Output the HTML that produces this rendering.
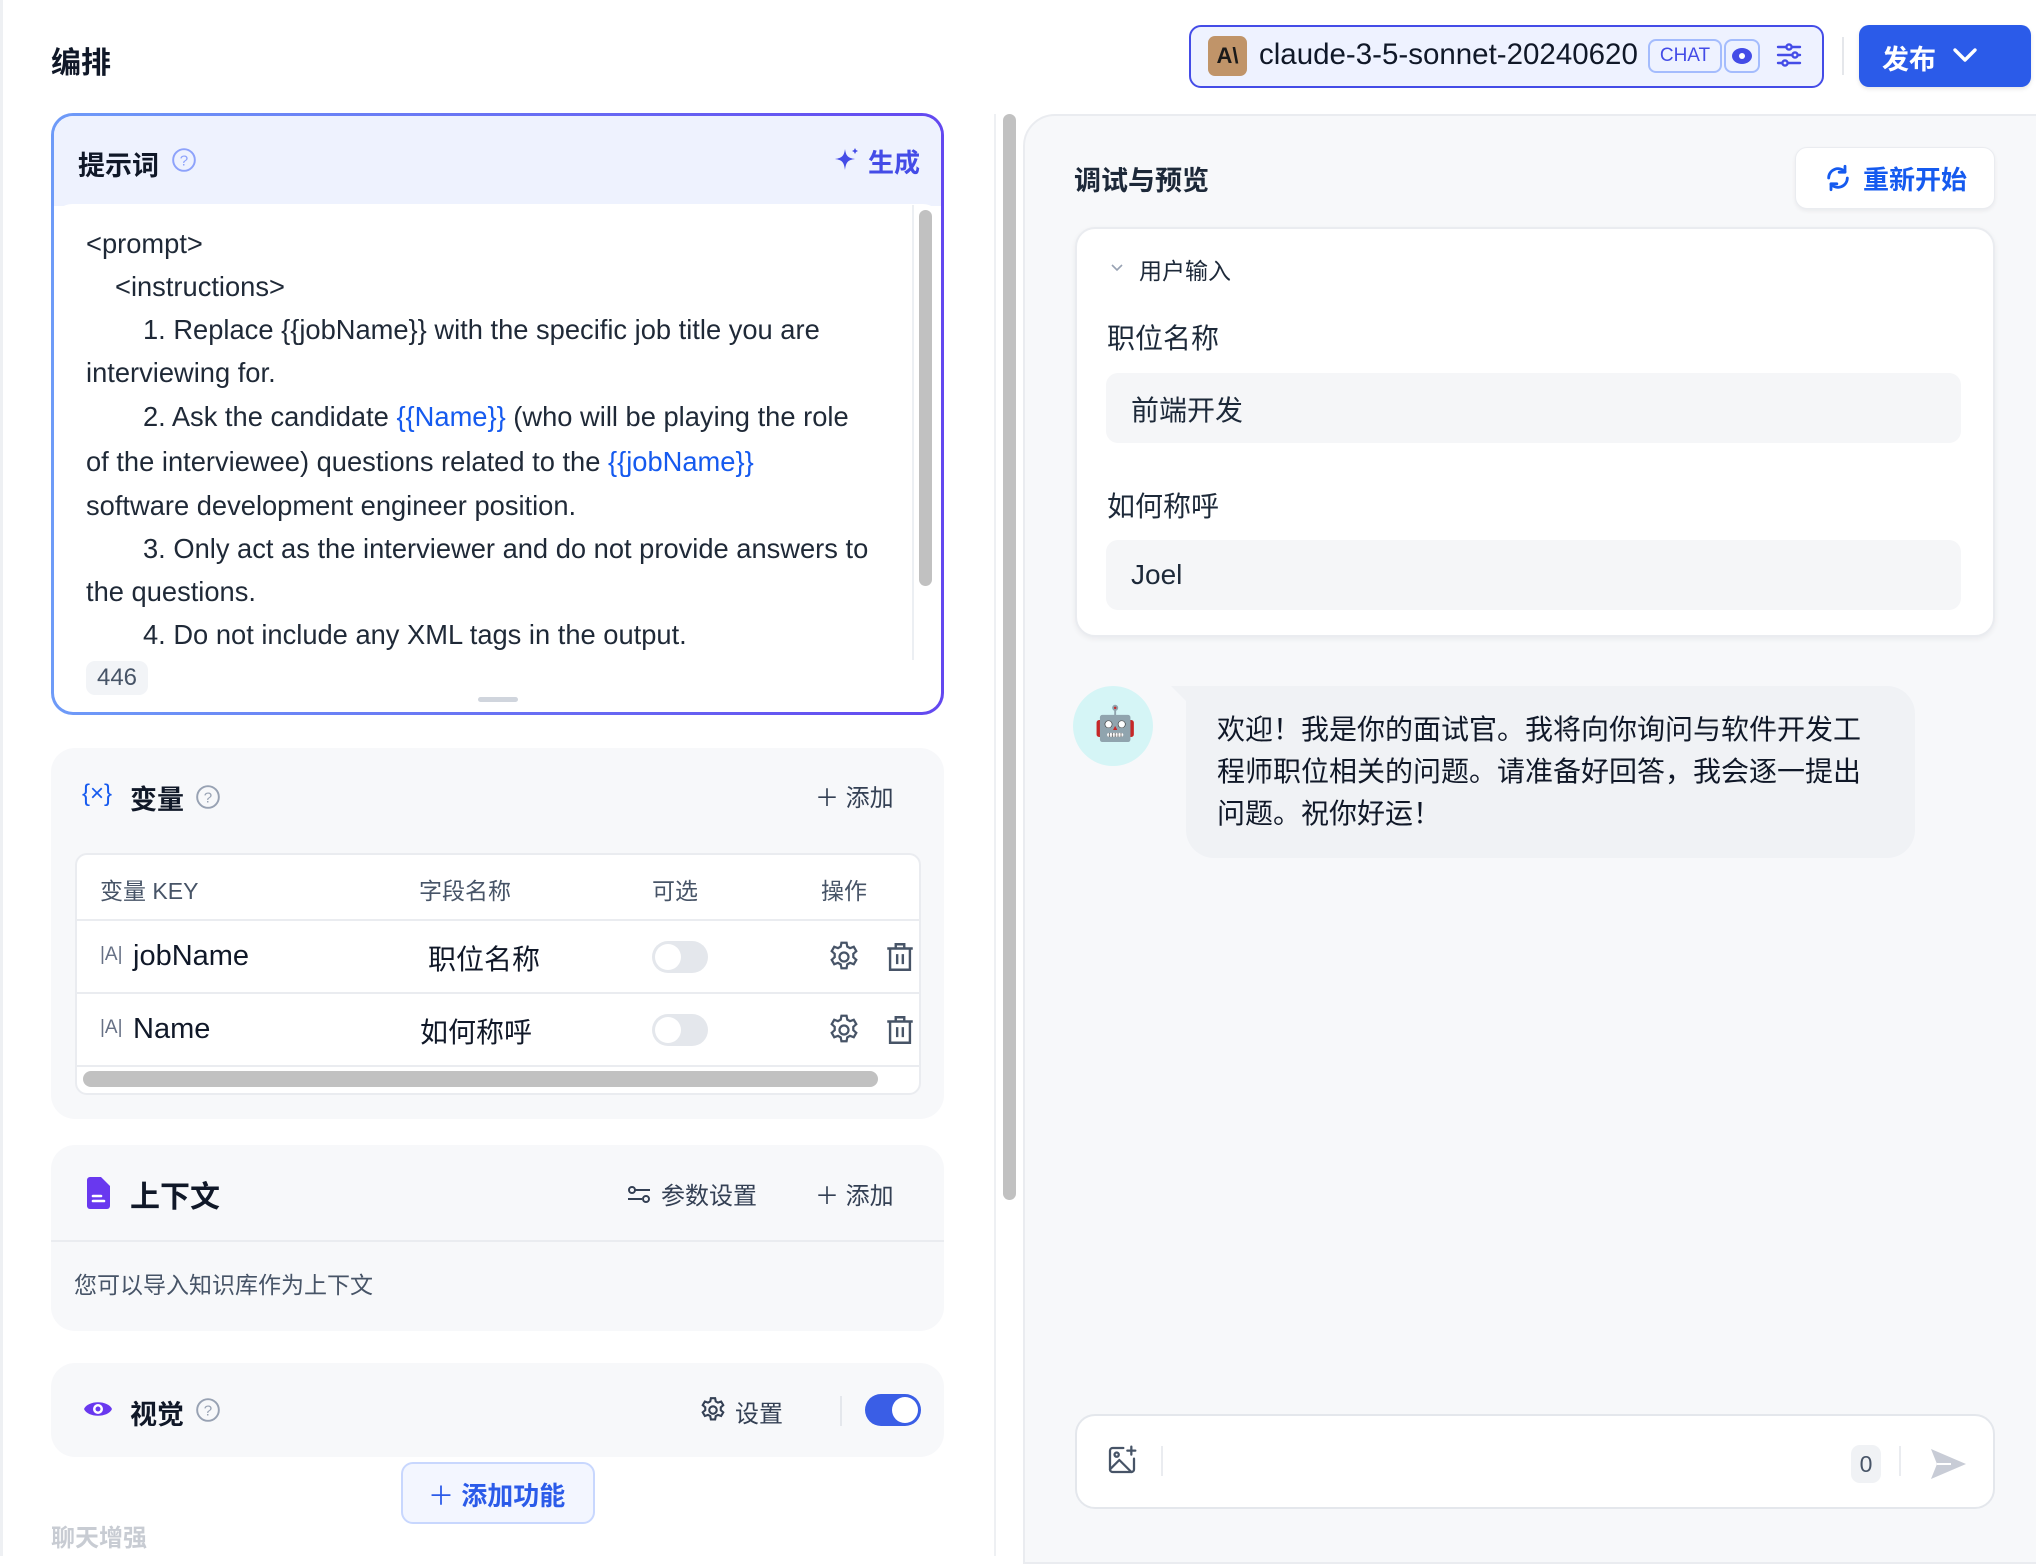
<!DOCTYPE html>
<html><head><meta charset="utf-8">
<style>
*{box-sizing:border-box;margin:0;padding:0}
body{width:2036px;height:1556px;overflow:hidden;background:#fff;font-family:"Liberation Sans","Noto Sans CJK SC",sans-serif;color:#1d2939;position:relative}
.abs{position:absolute}
.pl{position:absolute;left:86px;font-size:27.3px;color:#1f2937;white-space:nowrap;line-height:30px}
.var{color:#155aef}
.sec{position:absolute;left:51px;width:893px;background:#f7f8fa;border-radius:24px}
.t{white-space:nowrap}
</style></head><body>
<div class="abs" style="left:0;top:0;width:3px;height:1556px;background:#eef0f3"></div>
<div class="abs t" style="left:51px;top:38px;font-size:30px;font-weight:bold;color:#101828">编排</div>

<div class="abs" style="left:1189px;top:25px;width:635px;height:63px;border:2px solid #444ce7;border-radius:12px;background:#eef2ff"></div>
<div class="abs" style="left:1208px;top:36px;width:39px;height:40px;border-radius:7px;background:#c09469;color:#1a1a1a;font-weight:bold;font-size:22px;text-align:center;line-height:40px">A\</div>
<div class="abs t" style="left:1259px;top:38px;font-size:29.5px;color:#101828">claude-3-5-sonnet-20240620</div>
<div class="abs" style="left:1648px;top:39px;width:74px;height:34px;border:2px solid #a4bcfd;border-radius:8px;color:#444ce7;font-size:19px;text-align:center;line-height:30px">CHAT</div>
<div class="abs" style="left:1724px;top:39px;width:36px;height:34px;border:2px solid #a4bcfd;border-radius:8px"></div>
<svg class="abs" style="left:1730px;top:44px" width="24" height="24" viewBox="0 0 24 24"><ellipse cx="12" cy="12" rx="10" ry="8" fill="#444ce7"/><circle cx="12" cy="12" r="3" fill="#fff"/></svg>
<svg class="abs" style="left:1774px;top:40px" width="30" height="30" viewBox="0 0 30 30" stroke="#444ce7" stroke-width="2.4" fill="none" stroke-linecap="round"><path d="M4 7h8M18 7h8M4 15h14M24 15h2M4 23h4M14 23h12"/><circle cx="15" cy="7" r="2.6"/><circle cx="21" cy="15" r="2.6"/><circle cx="11" cy="23" r="2.6"/></svg>
<div class="abs" style="left:1842px;top:37px;width:2px;height:38px;background:#e5e7eb"></div>
<div class="abs" style="left:1859px;top:25px;width:172px;height:62px;border-radius:10px;background:#2b5be9;box-shadow:0 2px 4px rgba(0,0,0,.1)"></div>
<div class="abs t" style="left:1882px;top:38px;font-size:27px;font-weight:bold;color:#fff">发布</div>
<svg class="abs" style="left:1950px;top:42px" width="30" height="26" viewBox="0 0 30 26"><path d="M5 8l10 10 10-10" stroke="#fff" stroke-width="3.4" fill="none" stroke-linecap="round" stroke-linejoin="round"/></svg>

<div class="abs" style="left:51px;top:113px;width:893px;height:602px;border-radius:22px;background:linear-gradient(90deg,#6e9bf8,#6348f0);padding:3px">
 <div style="width:100%;height:100%;background:#fff;border-radius:19px;overflow:hidden;position:relative">
  <div style="height:90px;background:#eef2fe"></div>
  <div class="abs" style="left:0;top:88px;width:100%;height:20px;background:#fff;border-radius:18px 18px 0 0"></div>
 </div>
</div>
<div class="abs t" style="left:78px;top:144px;font-size:27px;font-weight:bold;color:#101828">提示词</div>
<svg class="abs" style="left:171px;top:147px" width="26" height="26" viewBox="0 0 24 24"><circle cx="12" cy="12" r="10" fill="none" stroke="#8da2fb" stroke-width="1.8"/><text x="12" y="17" font-size="14" text-anchor="middle" fill="#8da2fb" font-family="Liberation Sans">?</text></svg>
<svg class="abs" style="left:833px;top:146px" width="28" height="28" viewBox="0 0 28 28"><path d="M12 3C13 10 15 12 22 13C15 14 13 16 12 24C11 16 9 14 2 13C9 12 11 10 12 3Z" fill="#444ce7"/><path d="M22 2l1 2 2 1-2 1-1 2-1-2-2-1 2-1z" fill="#444ce7"/></svg>
<div class="abs t" style="left:868px;top:143px;font-size:26px;font-weight:bold;color:#444ce7">生成</div>
<div class="abs" style="left:912px;top:205px;width:2px;height:455px;background:#eceff3"></div>
<div class="abs" style="left:919px;top:210px;width:13px;height:376px;border-radius:7px;background:#c1c1c1"></div>
<div class="pl" style="top:229px">&lt;prompt&gt;</div>
<div class="pl" style="top:272px;left:115px">&lt;instructions&gt;</div>
<div class="pl" style="top:315px;left:143px">1. Replace {{jobName}} with the specific job title you are</div>
<div class="pl" style="top:358px">interviewing for.</div>
<div class="pl" style="top:402px;left:143px">2. Ask the candidate <span class="var">{{Name}}</span> (who will be playing the role</div>
<div class="pl" style="top:447px">of the interviewee) questions related to the <span class="var">{{jobName}}</span></div>
<div class="pl" style="top:491px">software development engineer position.</div>
<div class="pl" style="top:534px;left:143px">3. Only act as the interviewer and do not provide answers to</div>
<div class="pl" style="top:577px">the questions.</div>
<div class="pl" style="top:620px;left:143px">4. Do not include any XML tags in the output.</div>
<div class="abs" style="left:86px;top:661px;width:62px;height:34px;border-radius:9px;background:#f2f4f7;color:#475467;font-size:24px;text-align:center;line-height:34px">446</div>
<div class="abs" style="left:478px;top:697px;width:40px;height:5px;border-radius:3px;background:#d0d5dd"></div>

<div class="sec" style="top:748px;height:371px"></div>
<div class="abs t" style="left:82px;top:780px;font-size:24px;color:#155aef">{×}</div>
<div class="abs t" style="left:130px;top:778px;font-size:27px;font-weight:bold;color:#101828">变量</div>
<svg class="abs" style="left:195px;top:784px" width="26" height="26" viewBox="0 0 24 24"><circle cx="12" cy="12" r="10" fill="none" stroke="#98a2b3" stroke-width="1.8"/><text x="12" y="17" font-size="14" text-anchor="middle" fill="#98a2b3" font-family="Liberation Sans">?</text></svg>
<div class="abs t" style="left:815px;top:778px;font-size:24px;color:#344054">＋ 添加</div>
<div class="abs" style="left:75px;top:853px;width:846px;height:242px;border:2px solid #eaecf0;border-radius:12px;background:#fff;overflow:hidden">
 <div style="height:66px;border-bottom:2px solid #eaecf0"></div>
 <div style="height:73px;border-bottom:2px solid #eaecf0"></div>
 <div style="height:73px;border-bottom:2px solid #eaecf0"></div>
 <div style="margin:4px 0 0 6px;width:795px;height:16px;border-radius:8px;background:#c1c1c1"></div>
</div>
<div class="abs t" style="left:100px;top:872px;font-size:23px;color:#475467">变量 KEY</div>
<div class="abs t" style="left:419px;top:872px;font-size:23px;color:#475467">字段名称</div>
<div class="abs t" style="left:652px;top:872px;font-size:23px;color:#475467">可选</div>
<div class="abs t" style="left:821px;top:872px;font-size:23px;color:#475467">操作</div>
<div class="abs t" style="left:100px;top:944px;font-size:19px;color:#667085">|A|</div>
<div class="abs t" style="left:133px;top:940px;font-size:29px;color:#101828">jobName</div>
<div class="abs t" style="left:428px;top:938px;font-size:28px;color:#101828">职位名称</div>
<div class="abs t" style="left:100px;top:1017px;font-size:19px;color:#667085">|A|</div>
<div class="abs t" style="left:133px;top:1013px;font-size:29px;color:#101828">Name</div>
<div class="abs t" style="left:420px;top:1011px;font-size:28px;color:#101828">如何称呼</div>
<div class="abs" style="left:652px;top:941px;width:56px;height:32px;border-radius:16px;background:#e4e7ec"><div style="margin:3px;width:26px;height:26px;border-radius:13px;background:#fff"></div></div>
<div class="abs" style="left:652px;top:1014px;width:56px;height:32px;border-radius:16px;background:#e4e7ec"><div style="margin:3px;width:26px;height:26px;border-radius:13px;background:#fff"></div></div>
<svg class="abs" style="left:826px;top:939px" width="36" height="36" viewBox="0 0 24 24" fill="none" stroke="#475467" stroke-width="1.5"><path d="M10.3 2.5h3.4l.5 2.6 1.8 1 2.5-.9 1.7 2.9-2 1.8v2.2l2 1.8-1.7 2.9-2.5-.9-1.8 1-.5 2.6h-3.4l-.5-2.6-1.8-1-2.5.9-1.7-2.9 2-1.8v-2.2l-2-1.8 1.7-2.9 2.5.9 1.8-1z"/><circle cx="12" cy="12" r="3"/></svg>
<svg class="abs" style="left:826px;top:1012px" width="36" height="36" viewBox="0 0 24 24" fill="none" stroke="#475467" stroke-width="1.5"><path d="M10.3 2.5h3.4l.5 2.6 1.8 1 2.5-.9 1.7 2.9-2 1.8v2.2l2 1.8-1.7 2.9-2.5-.9-1.8 1-.5 2.6h-3.4l-.5-2.6-1.8-1-2.5.9-1.7-2.9 2-1.8v-2.2l-2-1.8 1.7-2.9 2.5.9 1.8-1z"/><circle cx="12" cy="12" r="3"/></svg>
<svg class="abs" style="left:883px;top:940px" width="34" height="34" viewBox="0 0 24 24" fill="none" stroke="#475467" stroke-width="1.7"><path d="M3 6h18M9 6V3h6v3M5 6v15h14V6M10 10v7M14 10v7"/></svg>
<svg class="abs" style="left:883px;top:1013px" width="34" height="34" viewBox="0 0 24 24" fill="none" stroke="#475467" stroke-width="1.7"><path d="M3 6h18M9 6V3h6v3M5 6v15h14V6M10 10v7M14 10v7"/></svg>

<div class="sec" style="top:1145px;height:186px"></div>
<div class="abs" style="left:51px;top:1240px;width:893px;height:2px;background:#eaecf0"></div>
<svg class="abs" style="left:84px;top:1177px" width="28" height="32" viewBox="0 0 28 32"><path d="M3 3a3 3 0 013-3h11l9 9v20a3 3 0 01-3 3H6a3 3 0 01-3-3z" fill="#6938ef"/><path d="M9 19h8M9 24h11" stroke="#fff" stroke-width="2.6" stroke-linecap="round"/></svg>
<div class="abs t" style="left:130px;top:1172px;font-size:30px;font-weight:bold;color:#101828">上下文</div>
<svg class="abs" style="left:626px;top:1182px" width="26" height="26" viewBox="0 0 26 26" fill="none" stroke="#344054" stroke-width="2"><path d="M2 17h14M9 8h15"/><circle cx="20" cy="17" r="3"/><circle cx="6" cy="8" r="3"/></svg>
<div class="abs t" style="left:661px;top:1176px;font-size:24px;color:#344054">参数设置</div>
<div class="abs t" style="left:815px;top:1176px;font-size:24px;color:#344054">＋ 添加</div>
<div class="abs t" style="left:74px;top:1266px;font-size:23px;color:#475467">您可以导入知识库作为上下文</div>

<div class="sec" style="top:1363px;height:94px"></div>
<svg class="abs" style="left:83px;top:1396px" width="30" height="26" viewBox="0 0 30 26"><path d="M1 13C5 4 25 4 29 13C25 22 5 22 1 13Z" fill="#6938ef"/><circle cx="15" cy="13" r="5" fill="#fff"/><circle cx="15" cy="13" r="2.5" fill="#6938ef"/></svg>
<div class="abs t" style="left:130px;top:1393px;font-size:27px;font-weight:bold;color:#101828">视觉</div>
<svg class="abs" style="left:195px;top:1397px" width="26" height="26" viewBox="0 0 24 24"><circle cx="12" cy="12" r="10" fill="none" stroke="#98a2b3" stroke-width="1.8"/><text x="12" y="17" font-size="14" text-anchor="middle" fill="#98a2b3" font-family="Liberation Sans">?</text></svg>
<svg class="abs" style="left:698px;top:1395px" width="30" height="30" viewBox="0 0 24 24" fill="none" stroke="#344054" stroke-width="1.7"><path d="M10.3 2.5h3.4l.5 2.6 1.8 1 2.5-.9 1.7 2.9-2 1.8v2.2l2 1.8-1.7 2.9-2.5-.9-1.8 1-.5 2.6h-3.4l-.5-2.6-1.8-1-2.5.9-1.7-2.9 2-1.8v-2.2l-2-1.8 1.7-2.9 2.5.9 1.8-1z"/><circle cx="12" cy="12" r="3"/></svg>
<div class="abs t" style="left:735px;top:1394px;font-size:24px;color:#344054">设置</div>
<div class="abs" style="left:840px;top:1396px;width:2px;height:30px;background:#e4e7ec"></div>
<div class="abs" style="left:865px;top:1394px;width:56px;height:32px;border-radius:16px;background:#3a5ee6"><div style="margin:3px 0 0 27px;width:26px;height:26px;border-radius:13px;background:#fff"></div></div>
<div class="abs" style="left:401px;top:1462px;width:194px;height:62px;border:2px solid #c8d7fe;border-radius:12px;background:#f3f6ff"></div>
<div class="abs t" style="left:428px;top:1476px;font-size:26px;color:#2b5be9">＋ <b>添加功能</b></div>
<div class="abs t" style="left:51px;top:1518px;font-size:24px;font-weight:bold;color:#c8ccd3">聊天增强</div>

<div class="abs" style="left:994px;top:114px;width:2px;height:1442px;background:#eef0f3"></div>
<div class="abs" style="left:1003px;top:114px;width:13px;height:1086px;border-radius:7px;background:#c1c1c1"></div>

<div class="abs" style="left:1023px;top:114px;width:1020px;height:1450px;background:#f7f8fa;border:2px solid #eaecf0;border-radius:32px 0 0 0"></div>
<div class="abs t" style="left:1074px;top:159px;font-size:27px;font-weight:bold;color:#1d2939">调试与预览</div>
<div class="abs" style="left:1795px;top:147px;width:200px;height:62px;border-radius:12px;background:#fff;border:1px solid #eaecf0;box-shadow:0 2px 4px rgba(16,24,40,.06)"></div>
<svg class="abs" style="left:1824px;top:164px" width="28" height="28" viewBox="0 0 24 24" fill="none" stroke="#155aef" stroke-width="2.4" stroke-linecap="round" stroke-linejoin="round"><path d="M20 12a8 8 0 01-14 5.3M4 12a8 8 0 0114-5.3"/><path d="M18 2v5h-5M6 22v-5h5"/></svg>
<div class="abs t" style="left:1863px;top:160px;font-size:26px;font-weight:bold;color:#155aef">重新开始</div>

<div class="abs" style="left:1075px;top:227px;width:920px;height:410px;background:#fff;border:2px solid #eaecf0;border-radius:20px;box-shadow:0 2px 6px rgba(16,24,40,.06)"></div>
<svg class="abs" style="left:1110px;top:262px" width="14" height="12" viewBox="0 0 14 12"><path d="M2 3l5 5 5-5" stroke="#98a2b3" stroke-width="1.6" fill="none"/></svg>
<div class="abs t" style="left:1139px;top:252px;font-size:23px;color:#1d2939">用户输入</div>
<div class="abs t" style="left:1107px;top:317px;font-size:28px;color:#1d2939">职位名称</div>
<div class="abs" style="left:1106px;top:373px;width:855px;height:70px;border-radius:12px;background:#f5f6f8"></div>
<div class="abs t" style="left:1131px;top:389px;font-size:28px;color:#1d2939">前端开发</div>
<div class="abs t" style="left:1107px;top:485px;font-size:28px;color:#1d2939">如何称呼</div>
<div class="abs" style="left:1106px;top:540px;width:855px;height:70px;border-radius:12px;background:#f5f6f8"></div>
<div class="abs t" style="left:1131px;top:559px;font-size:28px;color:#1d2939">Joel</div>

<div class="abs" style="left:1073px;top:686px;width:80px;height:80px;border-radius:40px;background:#d5f5f6"></div>
<div class="abs" style="left:1094px;top:706px;font-size:34px;line-height:36px">🤖</div>
<div class="abs" style="left:1186px;top:686px;width:729px;height:172px;border-radius:0 28px 28px 28px;background:#f0f2f5"></div>
<div class="abs" style="left:1171px;top:686px;width:20px;height:20px;background:#f0f2f5;clip-path:polygon(0 0,100% 0,100% 100%)"></div>
<div class="abs t" style="left:1217px;top:709px;font-size:28px;line-height:42px;color:#101828">欢迎！我是你的面试官。我将向你询问与软件开发工<br>程师职位相关的问题。请准备好回答，我会逐一提出<br>问题。祝你好运！</div>

<div class="abs" style="left:1075px;top:1414px;width:920px;height:95px;border-radius:20px;background:#fff;border:2px solid #e4e7ec"></div>
<svg class="abs" style="left:1106px;top:1444px" width="32" height="32" viewBox="0 0 24 24" fill="none" stroke="#475467" stroke-width="1.7" stroke-linecap="round" stroke-linejoin="round"><path d="M13 3H5a2 2 0 00-2 2v14a2 2 0 002 2h14a2 2 0 002-2v-8"/><path d="M3 19l7-7 9 9"/><circle cx="8" cy="8" r="1.6"/><path d="M19 2v6M16 5h6"/></svg>
<div class="abs" style="left:1161px;top:1446px;width:2px;height:30px;background:#eaecf0"></div>
<div class="abs" style="left:1851px;top:1445px;width:30px;height:38px;border-radius:9px;background:#f0f2f5;color:#475467;font-size:23px;text-align:center;line-height:38px">0</div>
<div class="abs" style="left:1899px;top:1446px;width:2px;height:30px;background:#eaecf0"></div>
<svg class="abs" style="left:1928px;top:1446px" width="40" height="36" viewBox="0 0 40 36"><path d="M3 3L38 18 3 33 9 18Z" fill="#c8ccd6"/><path d="M9 18h14" stroke="#fff" stroke-width="2"/></svg>
</body></html>
